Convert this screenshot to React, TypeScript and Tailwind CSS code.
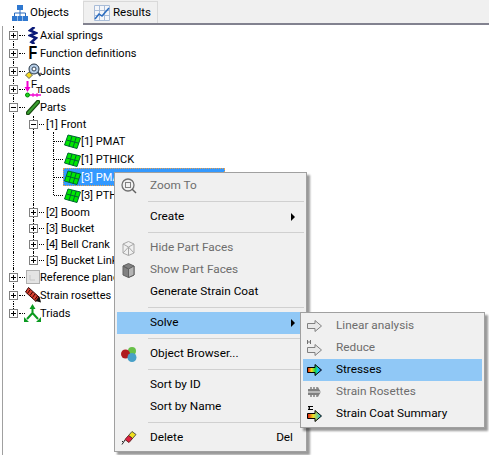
import type { ReactNode } from 'react';

const font = "[font-family:'Roboto','Liberation_Sans',sans-serif]";

function Expander({ open }: { open?: boolean }) {
  return (
    <svg width="9" height="9" viewBox="0 0 9 9" className="relative shrink-0">
      <rect x="0.5" y="0.5" width="8" height="8" fill="#fff" stroke="#808080" />
      <path d={open ? 'M2 4.5h5' : 'M2 4.5h5M4.5 2v5'} stroke="#000" fill="none" />
    </svg>
  );
}

function Grid() {
  return (
    <svg width="17" height="15" viewBox="0 0 17 15" className="shrink-0">
      <path d="M4 1 16.500 4l-3.500 10.500L.5 11z" fill="#00e800" stroke="#063" />
      <path d="M2.500 6 15 9.300M8 2 5 12.500M12.300 3 9 13.500" stroke="#063" fill="none" />
    </svg>
  );
}

const AxialIcon = (
  <svg width="10" height="17" viewBox="0 0 10 17" className="shrink-0">
    <path d="M6.500 0 2 3.500l6 2.500-6 2.500 6 2.500L3.500 15l3 2" stroke="#0a1a78" strokeWidth="2.600" fill="none" />
  </svg>
);
const FunctionIcon = <span className="block w-[11px] origin-center scale-x-75 text-[19px] leading-[18px] font-bold text-black [font-family:'Liberation_Sans',sans-serif]">F</span>;
const JointIcon = (
  <svg width="16" height="17" viewBox="0 0 16 17" className="shrink-0">
    <circle cx="9" cy="6" r="5" fill="#b8cfe8" stroke="#234" />
    <circle cx="9" cy="6" r="2" fill="#fff" stroke="#345" />
    <path d="m12.500 9 3 4" stroke="#345" strokeWidth="2" />
    <path d="m4 9 3.500 3L4 15.500.5 12z" fill="#f5dc20" stroke="#665" />
  </svg>
);
const LoadIcon = (
  <svg width="16" height="18" viewBox="0 0 16 18" className="shrink-0 overflow-visible">
    <path d="M2.500 1v9" stroke="#f000d0" strokeWidth="2" />
    <path d="m-.5 7 3 5 3-5z" fill="#f000d0" />
    <text x="6" y="8" fontSize="10" fontFamily="Liberation Sans" fill="#000">F</text>
    <text x="11" y="13" fontSize="9" fontFamily="Liberation Sans" fill="#000">T</text>
    <path d="M5 15h11" stroke="#f000d0" strokeWidth="1.500" />
    <path d="M8 13v4M12 13v4" stroke="#f000d0" />
    <circle cx="2.500" cy="15" r="2" fill="#20d020" stroke="#080" />
  </svg>
);
const PartIcon = (
  <svg width="14" height="15" viewBox="0 0 14 15" className="shrink-0">
    <path d="m2 13 10-11" stroke="#184a10" strokeWidth="4.500" strokeLinecap="round" />
    <path d="m2 13 10-11" stroke="#3aa030" strokeWidth="2" strokeLinecap="round" />
  </svg>
);
const PlaneIcon = (
  <svg width="14" height="14" viewBox="0 0 14 14" className="shrink-0">
    <rect x="0.500" y="0.500" width="13" height="13" fill="#e4e4e4" stroke="#b0b0b0" />
    <path d="M4 5v5h5" stroke="#c8c8c8" fill="none" />
  </svg>
);
const RosetteIcon = (
  <svg width="16" height="16" viewBox="0 0 16 16" className="shrink-0">
    <path d="M3.500.5 14 10l-3 4.500L.5 5z" fill="#d84030" stroke="#300" />
    <path d="m5 3-2.500 3.500M7.500 5 5 8.500M10 7l-2.500 3.500M12.500 9 10 12.500" stroke="#300" />
    <path d="m10.500 14 4-4.500 1.500 6z" fill="#111" />
  </svg>
);
const TriadIcon = (
  <svg width="17" height="18" viewBox="0 0 17 18" className="shrink-0">
    <path d="M8.500 3v6M8.500 9 3 15M8.500 9l5.500 6" stroke="#0a9a20" strokeWidth="2" fill="none" />
    <path d="m5.500 5 3-5 3 5zM0 13v5h5zM17 13v5h-5z" fill="#0a9a20" />
  </svg>
);

interface RowProps {
  h: string;
  pad: string;
  guides: string[];
  open?: boolean;
  box?: boolean;
  dots: string;
  icon?: ReactNode;
  wide?: boolean;
  label: string;
  selected?: boolean;
}

function Row({ h, pad, guides, open, box = true, dots, icon, wide, label, selected }: RowProps) {
  return (
    <div className={`relative flex items-center ${h} ${pad}`}>
      {guides.map((g) => (
        <span key={g} className={`absolute border-l border-dotted border-black ${g}`} />
      ))}
      {box && <Expander open={open} />}
      <span className={`h-0 shrink-0 border-t border-dotted border-black ${dots}`} />
      {selected ? (
        <span className="flex h-[18px] w-[162px] shrink-0 items-center border border-dotted border-[#e8a050] bg-[#3399ff] text-white">
          <span className="flex w-[17px] shrink-0 items-center"><Grid /></span>
          <span>{label}</span>
        </span>
      ) : (
        <>
          {icon && <span className={`flex shrink-0 items-center justify-center ${wide ? 'w-[17px]' : 'w-[15px]'}`}>{icon}</span>}
          <span className="whitespace-nowrap">{label}</span>
        </>
      )}
    </div>
  );
}

const top = 'left-[10px] top-0 bottom-0';
const mid = 'left-[30px] top-0 bottom-0';
const leaf = 'left-[50px] top-0 bottom-0';
const pad0 = 'pl-[6px]';
const pad1 = 'pl-[26px]';
const pad2 = 'pl-[50px]';

function Tree() {
  return (
    <div className="ml-[2px] h-[430px] border-l border-[#a0a0a0] text-[11px] leading-none text-black">
      <Row h="h-[18px]" pad={pad0} guides={[top]} dots="ml-[1px] w-[6px]" icon={AxialIcon} label="Axial springs" />
      <Row h="h-[18px]" pad={pad0} guides={[top]} dots="ml-[1px] w-[6px]" icon={FunctionIcon} label="Function definitions" />
      <Row h="h-[18px]" pad={pad0} guides={[top]} dots="ml-[1px] w-[6px]" icon={JointIcon} label="Joints" />
      <Row h="h-[18px]" pad={pad0} guides={[top]} dots="ml-[1px] w-[6px]" icon={LoadIcon} label="Loads" />
      <Row h="h-[18px]" pad={pad0} guides={[top]} open dots="ml-[1px] w-[6px]" icon={PartIcon} label="Parts" />
      <Row h="h-[16px]" pad={pad1} guides={[top, mid]} open dots="ml-[1px] mr-[2px] w-[5px]" label="[1] Front" />
      <Row h="h-[18px]" pad={pad2} guides={[top, mid, leaf]} box={false} dots="ml-[1px] mr-[1px] w-[9px]" icon={<Grid />} wide label="[1] PMAT" />
      <Row h="h-[18px]" pad={pad2} guides={[top, mid, leaf]} box={false} dots="ml-[1px] mr-[1px] w-[9px]" icon={<Grid />} wide label="[1] PTHICK" />
      <Row h="h-[18px]" pad={pad2} guides={[top, mid, leaf]} box={false} dots="ml-[1px] w-[9px]" label="[3] PMAT" selected />
      <Row h="h-[18px]" pad={pad2} guides={[top, mid, 'left-[50px] top-0 h-[9px]']} box={false} dots="ml-[1px] mr-[1px] w-[9px]" icon={<Grid />} wide label="[3] PTHICK" />
      <Row h="h-[16px]" pad={pad1} guides={[top, mid]} dots="ml-[1px] mr-[2px] w-[5px]" label="[2] Boom" />
      <Row h="h-[16px]" pad={pad1} guides={[top, mid]} dots="ml-[1px] mr-[2px] w-[5px]" label="[3] Bucket" />
      <Row h="h-[16px]" pad={pad1} guides={[top, mid]} dots="ml-[1px] mr-[2px] w-[5px]" label="[4] Bell Crank" />
      <Row h="h-[16px]" pad={pad1} guides={[top, 'left-[30px] top-0 h-[8px]']} dots="ml-[1px] mr-[2px] w-[5px]" label="[5] Bucket Link" />
      <Row h="h-[18px]" pad={pad0} guides={[top]} dots="ml-[1px] w-[6px]" icon={PlaneIcon} label="Reference planes" />
      <Row h="h-[18px]" pad={pad0} guides={[top]} dots="ml-[1px] w-[6px]" icon={RosetteIcon} label="Strain rosettes" />
      <Row h="h-[18px]" pad={pad0} guides={['left-[10px] top-0 h-[9px]']} dots="ml-[1px] w-[6px]" icon={TriadIcon} label="Triads" />
    </div>
  );
}

function Tabs() {
  return (
    <div className="flex h-[25px] items-end border-b-2 border-[#82828f] bg-[#f0f0f0] text-[11.5px] text-black">
      <div className="z-10 -mb-[2px] flex h-[25px] w-[83px] items-center gap-[2px] bg-white pl-[12px]">
        <svg width="16" height="16" viewBox="0 0 16 16" className="shrink-0">
          <path d="M8 5v3M2.500 11V8h11v3M8 8v3" stroke="#2a6cc0" fill="none" />
          <path d="M5 0h6v5H5zM0 11h5v5H0zM5.500 11h5v5h-5zM11 11h5v5h-5z" fill="#2f78d0" />
        </svg>
        <span>Objects</span>
      </div>
      <div className="flex h-[22px] w-[75px] items-center gap-[3px] border border-b-0 border-[#d9d9d9] pl-[10px]">
        <svg width="16" height="16" viewBox="0 0 16 16" className="shrink-0">
          <path d="M.5.5h15v15H.5zM5.500.5v15M10.500.5v15M.5 5.500h15M.5 10.500h15" stroke="#a8bcd8" fill="#f4f6fa" />
          <path d="m1 14 4-5 3 2 7-8" stroke="#2a6cc0" strokeWidth="1.500" fill="none" />
        </svg>
        <span>Results</span>
      </div>
    </div>
  );
}

function MenuItem({ icon, label, hint, arrow, disabled, hot }: { icon?: ReactNode; label: string; hint?: string; arrow?: boolean; disabled?: boolean; hot?: boolean }) {
  return (
    <div className={`flex h-[22px] items-center ${hot ? 'bg-[#90c8f6]' : ''} ${disabled ? 'text-[#6d6d6d]' : 'text-black'}`}>
      <span className="flex w-[33px] shrink-0 items-center pl-[4px]">{icon}</span>
      <span className="flex-1 whitespace-nowrap">{label}</span>
      {hint && <span className="mr-[11px]">{hint}</span>}
      {arrow && <span className="mr-[9px] h-0 w-0 border-y-[4px] border-l-[4px] border-y-transparent border-l-black" />}
    </div>
  );
}

const Sep = () => (
  <div className="flex h-[9px] items-center pl-[31px]">
    <div className="h-px flex-1 bg-[#d0d0d0]" />
  </div>
);

function Arrow({ fill, stroke = '#808080' }: { fill: string; stroke?: string }) {
  return <path d="M.5 3.500H8V.5l6.500 5.500L8 11.500v-3H.5z" fill={fill} stroke={stroke} />;
}

function ContextMenu() {
  return (
    <div className="absolute left-[114px] top-[172px] w-[193px] border border-[#a0a0a0] bg-[#f0f0f0] p-[2px] text-[11.8px] leading-none shadow-[3px_3px_2px_rgba(0,0,0,0.4)]">
      <MenuItem disabled label="Zoom To" icon={
        <svg width="16" height="16" viewBox="0 0 16 16" className="shrink-0">
          <circle cx="7" cy="7" r="6" fill="none" stroke="#707070" strokeWidth="1.300" />
          <rect x="4.500" y="4.500" width="5" height="5" fill="none" stroke="#808080" />
          <path d="m11 11 4 4" stroke="#606060" strokeWidth="1.500" />
        </svg>
      } />
      <Sep />
      <MenuItem label="Create" arrow />
      <Sep />
      <MenuItem disabled label="Hide Part Faces" icon={
        <svg width="13" height="15" viewBox="0 0 13 15" className="ml-[1px] shrink-0">
          <path d="M1 3 6.500.5 12 3v9l-5.500 2.500L1 12zM1 3l5.500 3L12 3M6.500 6v8.500M1 12l5.500-6L12 12" fill="none" stroke="#a8a8a8" />
        </svg>
      } />
      <MenuItem disabled label="Show Part Faces" icon={
        <svg width="13" height="15" viewBox="0 0 13 15" className="ml-[1px] shrink-0">
          <path d="M1 3 6.500.5 12 3v9l-5.500 2.500L1 12z" fill="#808080" stroke="#606060" />
          <path d="M1 3l5.500 3L12 3v9l-5.500 2.500V6z" fill="#b4b4b4" stroke="#606060" />
        </svg>
      } />
      <MenuItem label="Generate Strain Coat" />
      <Sep />
      <MenuItem hot label="Solve" arrow />
      <Sep />
      <MenuItem label="Object Browser..." icon={
        <svg width="16" height="15" viewBox="0 0 16 15" className="shrink-0">
          <circle cx="11" cy="4" r="4" fill="#68c048" />
          <circle cx="4.500" cy="7" r="4.500" fill="#b01c20" />
          <circle cx="11" cy="10.500" r="4.500" fill="#48a0c8" />
        </svg>
      } />
      <Sep />
      <MenuItem label="Sort by ID" />
      <MenuItem label="Sort by Name" />
      <Sep />
      <MenuItem label="Delete" hint="Del" icon={
        <svg width="16" height="14" viewBox="0 0 16 14" className="shrink-0">
          <path d="m11 .5 4 3-3.500 4-4-3z" fill="#f0e020" stroke="#554" />
          <path d="m7.500 4.500 4 3-3.500 4-4-3z" fill="#e02040" stroke="#622" />
          <path d="M1 13.500 4 9M2 10l-1 1" stroke="#222" />
        </svg>
      } />
    </div>
  );
}

function SolveMenu() {
  return (
    <div className="absolute left-[300px] top-[312px] w-[185px] border border-[#a0a0a0] bg-[#f0f0f0] p-[2px] text-[11.8px] leading-none shadow-[3px_3px_2px_rgba(0,0,0,0.4)]">
      <MenuItem disabled label="Linear analysis" icon={<svg width="15" height="12" viewBox="0 0 15 12" className="shrink-0"><Arrow fill="#e8e8e8" /></svg>} />
      <MenuItem disabled label="Reduce" icon={
        <svg width="15" height="16" viewBox="0 0 15 16" className="shrink-0">
          <path d="M.5 0v4M3.500 0v4M.5 2h3" stroke="#707070" fill="none" />
          <g transform="translate(0 4)"><Arrow fill="#e8e8e8" /></g>
        </svg>
      } />
      <MenuItem hot label="Stresses" icon={
        <svg width="15" height="12" viewBox="0 0 15 12" className="shrink-0">
          <defs>
            <linearGradient id="stress" x1="0" x2="1" y1="0" y2="0">
              <stop offset="0" stopColor="#e01010" />
              <stop offset="0.3" stopColor="#f0e020" />
              <stop offset="0.55" stopColor="#20d040" />
              <stop offset="0.75" stopColor="#10d0f0" />
              <stop offset="1" stopColor="#1030e0" />
            </linearGradient>
          </defs>
          <Arrow fill="url(#stress)" stroke="#000" />
        </svg>
      } />
      <MenuItem disabled label="Strain Rosettes" icon={
        <svg width="15" height="12" viewBox="0 0 15 12" className="shrink-0">
          <path d="M1 3h9l1-2 1 2 2 3-2 3-1 2-1-2H1z" fill="#808080" />
          <path d="M4 1v10M7 1v10M10 1v10" stroke="#808080" strokeWidth="1.500" />
          <path d="M1 6h13" stroke="#f0f0f0" />
        </svg>
      } />
      <MenuItem label="Strain Coat Summary" icon={
        <svg width="15" height="16" viewBox="0 0 15 16" className="shrink-0">
          <defs>
            <linearGradient id="coat" x1="0" x2="1" y1="0" y2="0">
              <stop offset="0" stopColor="#e01010" />
              <stop offset="0.4" stopColor="#f0e020" />
              <stop offset="1" stopColor="#10c0f0" />
            </linearGradient>
          </defs>
          <path d="M1 .5h5M1 .5l2 1.500-2 1.500h5" stroke="#000" fill="none" />
          <g transform="translate(0 4)"><Arrow fill="url(#coat)" stroke="#000" /></g>
        </svg>
      } />
    </div>
  );
}

export default function App() {
  return (
    <div className={`relative h-[455px] w-[489px] overflow-hidden bg-white ${font}`}>
      <Tabs />
      <div className="pt-px">
        <Tree />
      </div>
      <ContextMenu />
      <SolveMenu />
    </div>
  );
}
